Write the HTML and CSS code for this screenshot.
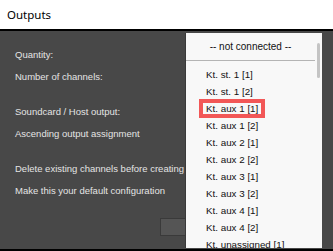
FILE: index.html
```html
<!DOCTYPE html>
<html>
<head>
<meta charset="utf-8">
<link rel="stylesheet" href="styles.css">
</head>
<body>
<div class="window">
  <div class="titlebar">Outputs</div>
  <div class="main">
    <div class="form">
      <div class="group">
        <div class="row">Quantity:</div>
        <div class="row">Number of channels:</div>
      </div>
      <div class="group">
        <div class="row">Soundcard / Host output:</div>
        <div class="row">Ascending output assignment</div>
      </div>
      <div class="group">
        <div class="row">Delete existing channels before creating</div>
        <div class="row">Make this your default configuration</div>
      </div>
      <div class="buttons">
        <div class="btn">OK</div>
      </div>
    </div>
    <div class="popup">
      <div class="list">
        <div class="header">-- not connected --</div>
        <div class="sep"></div>
        <div class="item"><span>Kt. st. 1 [1]</span></div>
        <div class="item"><span>Kt. st. 1 [2]</span></div>
        <div class="item selected"><span>Kt. aux 1 [1]</span></div>
        <div class="item"><span>Kt. aux 1 [2]</span></div>
        <div class="item"><span>Kt. aux 2 [1]</span></div>
        <div class="item"><span>Kt. aux 2 [2]</span></div>
        <div class="item"><span>Kt. aux 3 [1]</span></div>
        <div class="item"><span>Kt. aux 3 [2]</span></div>
        <div class="item"><span>Kt. aux 4 [1]</span></div>
        <div class="item"><span>Kt. aux 4 [2]</span></div>
        <div class="item"><span>Kt. unassigned [1]</span></div>
      </div>
      <div class="scroll"><div class="thumb"></div></div>
    </div>
  </div>
</div>
</body>
</html>
```
FILE: styles.css
```css
html, body {
  margin: 0;
  padding: 0;
  background: #484848;
}
.window {
  width: 333px;
  height: 251px;
  overflow: hidden;
  display: flex;
  flex-direction: column;
}
.titlebar {
  height: 29px;
  flex: none;
  background: #ffffff;
  border-bottom: 2px solid #000000;
  box-sizing: content-box;
  display: flex;
  align-items: center;
  padding-left: 7px;
  font-family: "Noto Sans", sans-serif;
  font-size: 11.5px;
  color: #000000;
}
.main {
  position: relative;
  height: 218px;
  flex: none;
  background: #484848;
  border-bottom: 2px solid #000000;
}
.form {
  padding: 13px 0 0 15px;
  display: flex;
  flex-direction: column;
  gap: 13px;
  font-family: "Liberation Sans", Arial, sans-serif;
  font-size: 9.5px;
  color: #e4e4e4;
}
.row {
  height: 22px;
  line-height: 22px;
  white-space: nowrap;
}
.buttons {
  margin-top: 3px;
  padding-left: 145px;
}
.btn {
  width: 70px;
  height: 16px;
  background: #555555;
  border: 1px solid #3a3a3a;
  line-height: 16px;
  padding-left: 24px;
  box-sizing: content-box;
  color: #d8d8d8;
}
.popup {
  position: absolute;
  left: 186px;
  top: 2px;
  width: 136px;
  height: 215px;
  background: #f8f8f8;
  display: flex;
  align-items: flex-start;
  box-shadow: -1px 0 0 #3a3a3a;
  overflow: hidden;
}
.list {
  width: 129px;
  flex: none;
  display: flex;
  flex-direction: column;
  font-family: "Liberation Sans", Arial, sans-serif;
  font-size: 9.8px;
  color: #111111;
}
.header {
  height: 27px;
  flex: none;
  display: flex;
  align-items: center;
  justify-content: center;
  font-size: 10px;
  white-space: nowrap;
}
.sep {
  height: 1px;
  flex: none;
  background: #b4b4b4;
  margin-bottom: 5px;
}
.item {
  height: 17px;
  flex: none;
  display: flex;
  align-items: center;
  padding-left: 13px;
  white-space: nowrap;
}
.item span {
  display: block;
  line-height: 11px;
  padding: 0 3px;
  border: 4px solid transparent;
}
.item.selected span {
  border-color: #f25757;
}
.scroll {
  width: 7px;
  flex: none;
  align-self: stretch;
  position: relative;
}
.thumb {
  position: absolute;
  left: 2px;
  top: 10px;
  width: 3px;
  height: 35px;
  border-radius: 2px;
  background: #c4c4c4;
}
```
